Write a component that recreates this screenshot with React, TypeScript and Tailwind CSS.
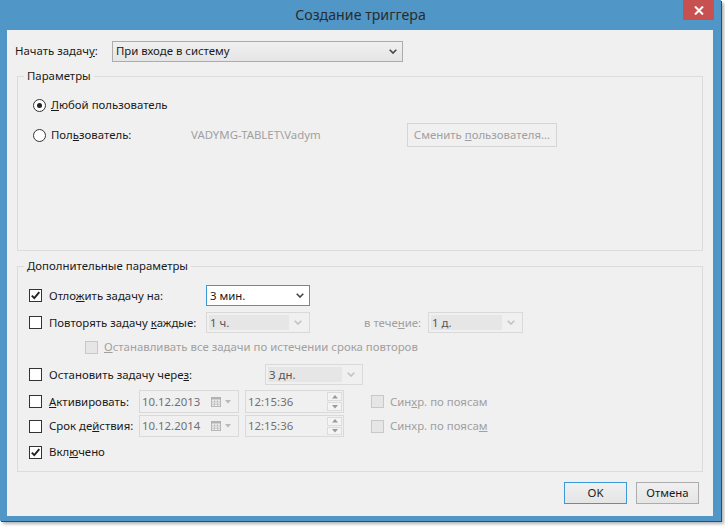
import React from "react";

const font = "font-['Segoe_UI','Noto_Sans','Liberation_Sans',sans-serif]";

const Chevron: React.FC<{ color: string }> = ({ color }) => (
  <svg width="8" height="5" viewBox="0 0 8 5">
    <polyline points="0.7,0.7 4,4 7.3,0.7" fill="none" stroke={color} strokeWidth="1.6" />
  </svg>
);

const Checkbox: React.FC<{ checked?: boolean; disabled?: boolean }> = ({ checked, disabled }) => (
  <div
    className={
      "w-[13px] h-[13px] shrink-0 border flex items-center justify-center " +
      (disabled ? "border-[#c8c8c8] bg-[#e6e6e6]" : "border-[#333333] bg-white")
    }
  >
    {checked && (
      <svg width="11" height="11" viewBox="0 0 11 11">
        <path d="M1.8 5.6 L4.3 8.2 L9.3 2.2" fill="none" stroke="#222" strokeWidth="1.9" />
      </svg>
    )}
  </div>
);

const Radio: React.FC<{ checked?: boolean }> = ({ checked }) => (
  <div className="w-[13px] h-[13px] shrink-0 rounded-full border border-[#333333] bg-white flex items-center justify-center">
    {checked && <div className="w-[5px] h-[5px] rounded-full bg-[#222]" />}
  </div>
);

type ComboProps = { value: string; width: string; variant: "button" | "focused" | "disabled" };

const Combo: React.FC<ComboProps> = ({ value, width, variant }) => {
  if (variant === "disabled") {
    return (
      <div className={`${width} h-[21px] border border-[#d9d9d9] bg-[#f0f0f0] flex items-center p-[2px]`}>
        <div className="flex-1 h-full bg-[#e6e6e6] text-[#555] pl-[1px] flex items-center">{value}</div>
        <div className="w-[18px] flex justify-center">
          <Chevron color="#c2c2c2" />
        </div>
      </div>
    );
  }
  const box =
    variant === "focused"
      ? "border-[#3c99d8] bg-white"
      : "border-[#acacac] bg-[linear-gradient(#f0f0f0,#e5e5e5)]";
  return (
    <div className={`${width} h-[21px] border ${box} flex items-center pl-[3px] text-[#1a1a1a]`}>
      <div className="flex-1">{value}</div>
      <div className="w-[18px] flex justify-center">
        <Chevron color="#444" />
      </div>
    </div>
  );
};

const DatePicker: React.FC<{ value: string; h: string }> = ({ value, h }) => (
  <div className={`w-[100px] ${h} border border-[#d9d9d9] flex items-center pl-[2px] text-[#707070]`}>
    <div className="flex-1">{value}</div>
    <svg width="10" height="10" viewBox="0 0 10 10" className="mr-[4px]">
      <rect x="0.5" y="0.5" width="9" height="9" fill="#ececec" stroke="#b4b4b4" />
      <rect x="0.5" y="0.5" width="9" height="2" fill="#b4b4b4" />
      <path d="M3.5 3 V9.5 M6.5 3 V9.5 M0.5 5 H9.5 M0.5 7.3 H9.5" stroke="#c8c8c8" strokeWidth="1" />
    </svg>
    <svg width="6" height="4" viewBox="0 0 6 4" className="mr-[7px]">
      <polygon points="0,0 6,0 3,3.5" fill="#b8b8b8" />
    </svg>
  </div>
);

const TimeBox: React.FC<{ value: string; h: string }> = ({ value, h }) => (
  <div className={`w-[99px] ${h} border border-[#d9d9d9] flex items-center pl-[2px] pr-[1px] text-[#707070]`}>
    <div className="flex-1">{value}</div>
    <div className="w-[15px] h-full flex flex-col gap-[1px] py-[1px]">
      <div className="flex-1 border border-[#dcdcdc] bg-[#f4f4f4] flex items-center justify-center">
        <svg width="6" height="4" viewBox="0 0 6 4">
          <polygon points="0,3.5 6,3.5 3,0" fill="#9a9a9a" />
        </svg>
      </div>
      <div className="flex-1 border border-[#dcdcdc] bg-[#f4f4f4] flex items-center justify-center">
        <svg width="6" height="4" viewBox="0 0 6 4">
          <polygon points="0,0 6,0 3,3.5" fill="#9a9a9a" />
        </svg>
      </div>
    </div>
  </div>
);

const Group: React.FC<React.PropsWithChildren<{ title: string; h: string }>> = ({ title, h, children }) => (
  <div className={`relative ml-[10px] w-[686px] ${h} border border-[#dcdcdc] flex flex-col`}>
    <span className="absolute -top-[9px] left-[6px] px-[3px] bg-[#f0f0f0] leading-[16px] text-[#1a1a1a]">
      {title}
    </span>
    {children}
  </div>
);

export default function App() {
  return (
    <div className={`w-[725px] h-[527px] bg-white ${font} text-[11.4px] leading-[16px]`}>
      <div className="w-[721px] h-[521px] bg-[#5097c7] shadow-[1px_1px_0_#3d4a55,3px_3px_3px_rgba(0,0,0,0.3)] flex flex-col">
        <div className="relative h-[30px] flex items-center justify-center text-[14.2px] text-[#2b2b2b] pb-[1px]">
          Создание триггера
          <div className="absolute right-[7px] top-0 w-[31px] h-[20px] bg-[#c75050] flex items-center justify-center">
            <svg width="10" height="9" viewBox="0 0 10 9">
              <path d="M1 0.5 L9 8.5 M9 0.5 L1 8.5" stroke="white" strokeWidth="2" />
            </svg>
          </div>
        </div>

        <div className="ml-[7px] w-[706px] h-[486px] bg-[#f0f0f0] flex flex-col text-[#1a1a1a]">
          <div className="mt-[10px] h-[22px] flex items-center pl-[8px]">
            <div className="w-[97px]">
              Начать задач<u>у</u>:
            </div>
            <Combo value="При входе в систему" width="w-[291px]" variant="button" />
          </div>

          <div className="mt-[14px]">
            <Group title="Параметры" h="h-[175px]">
              <div className="mt-[20px] h-[16px] flex items-center pl-[15px] gap-[5px]">
                <Radio checked />
                <span>
                  <u>Л</u>юбой пользователь
                </span>
              </div>
              <div className="mt-[10px] h-[24px] flex items-center pl-[15px]">
                <div className="w-[158px] flex items-center gap-[5px]">
                  <Radio />
                  <span>
                    Пол<u>ь</u>зователь:
                  </span>
                </div>
                <div className="w-[216px] text-[#a0a0a0]">VADYMG-TABLET\Vadym</div>
                <div className="w-[150px] h-[24px] border border-[#d5d5d5] flex items-center justify-center text-[#a0a0a0]">
                  <span>
                    Сменить <u>п</u>ользователя...
                  </span>
                </div>
              </div>
            </Group>
          </div>

          <div className="mt-[15px]">
            <Group title="Дополнительные параметры" h="h-[206px]">
              <div className="mt-[18px] h-[21px] flex items-center pl-[11px]">
                <div className="w-[177px] flex items-center gap-[7px]">
                  <Checkbox checked />
                  <span>
                    Отло<u>ж</u>ить задачу на:
                  </span>
                </div>
                <Combo value="3 мин." width="w-[104px]" variant="focused" />
              </div>

              <div className="mt-[6px] h-[21px] flex items-center pl-[11px]">
                <div className="w-[177px] flex items-center gap-[7px]">
                  <Checkbox />
                  <span>
                    Повторять задачу <u>к</u>аждые:
                  </span>
                </div>
                <Combo value="1 ч." width="w-[104px]" variant="disabled" />
                <div className="ml-[54px] w-[64px] text-[#a0a0a0]">
                  в тече<u>н</u>ие:
                </div>
                <Combo value="1 д." width="w-[95px]" variant="disabled" />
              </div>

              <div className="mt-[6px] h-[16px] flex items-center pl-[67px] gap-[6px]">
                <Checkbox disabled />
                <span className="text-[#a0a0a0]">
                  <u>О</u>станавливать все задачи по истечении срока повторов
                </span>
              </div>

              <div className="mt-[9px] h-[21px] flex items-center pl-[11px]">
                <div className="w-[236px] flex items-center gap-[7px]">
                  <Checkbox />
                  <span>
                    Остановить задачу чере<u>з</u>:
                  </span>
                </div>
                <Combo value="3 дн." width="w-[98px]" variant="disabled" />
              </div>

              <div className="mt-[5px] h-[23px] flex items-center pl-[11px]">
                <div className="w-[110px] flex items-center gap-[7px]">
                  <Checkbox />
                  <span>
                    <u>А</u>ктивировать:
                  </span>
                </div>
                <DatePicker value="10.12.2013" h="h-[23px]" />
                <div className="ml-[6px]">
                  <TimeBox value="12:15:36" h="h-[23px]" />
                </div>
                <div className="ml-[27px] flex items-center gap-[6px] text-[#a0a0a0]">
                  <Checkbox disabled />
                  <span>
                    Син<u>х</u>р. по поясам
                  </span>
                </div>
              </div>

              <div className="mt-[2px] h-[22px] flex items-center pl-[11px]">
                <div className="w-[110px] flex items-center gap-[7px]">
                  <Checkbox />
                  <span>
                    Срок де<u>й</u>ствия:
                  </span>
                </div>
                <DatePicker value="10.12.2014" h="h-[22px]" />
                <div className="ml-[6px]">
                  <TimeBox value="12:15:36" h="h-[22px]" />
                </div>
                <div className="ml-[27px] flex items-center gap-[6px] text-[#a0a0a0]">
                  <Checkbox disabled />
                  <span>
                    Синхр. по пояса<u>м</u>
                  </span>
                </div>
              </div>

              <div className="mt-[7px] h-[16px] flex items-center pl-[11px] gap-[7px]">
                <Checkbox checked />
                <span>
                  Вкл<u>ю</u>чено
                </span>
              </div>
            </Group>
          </div>

          <div className="mt-[10px] flex justify-end gap-[9px] pr-[14px]">
            <div className="w-[63px] h-[22px] border border-[#3c99d8] bg-[linear-gradient(#f0f0f0,#e5e5e5)] flex items-center justify-center">
              OK
            </div>
            <div className="w-[63px] h-[22px] border border-[#acacac] bg-[linear-gradient(#f0f0f0,#e5e5e5)] flex items-center justify-center">
              Отмена
            </div>
          </div>
        </div>
      </div>
    </div>
  );
}
